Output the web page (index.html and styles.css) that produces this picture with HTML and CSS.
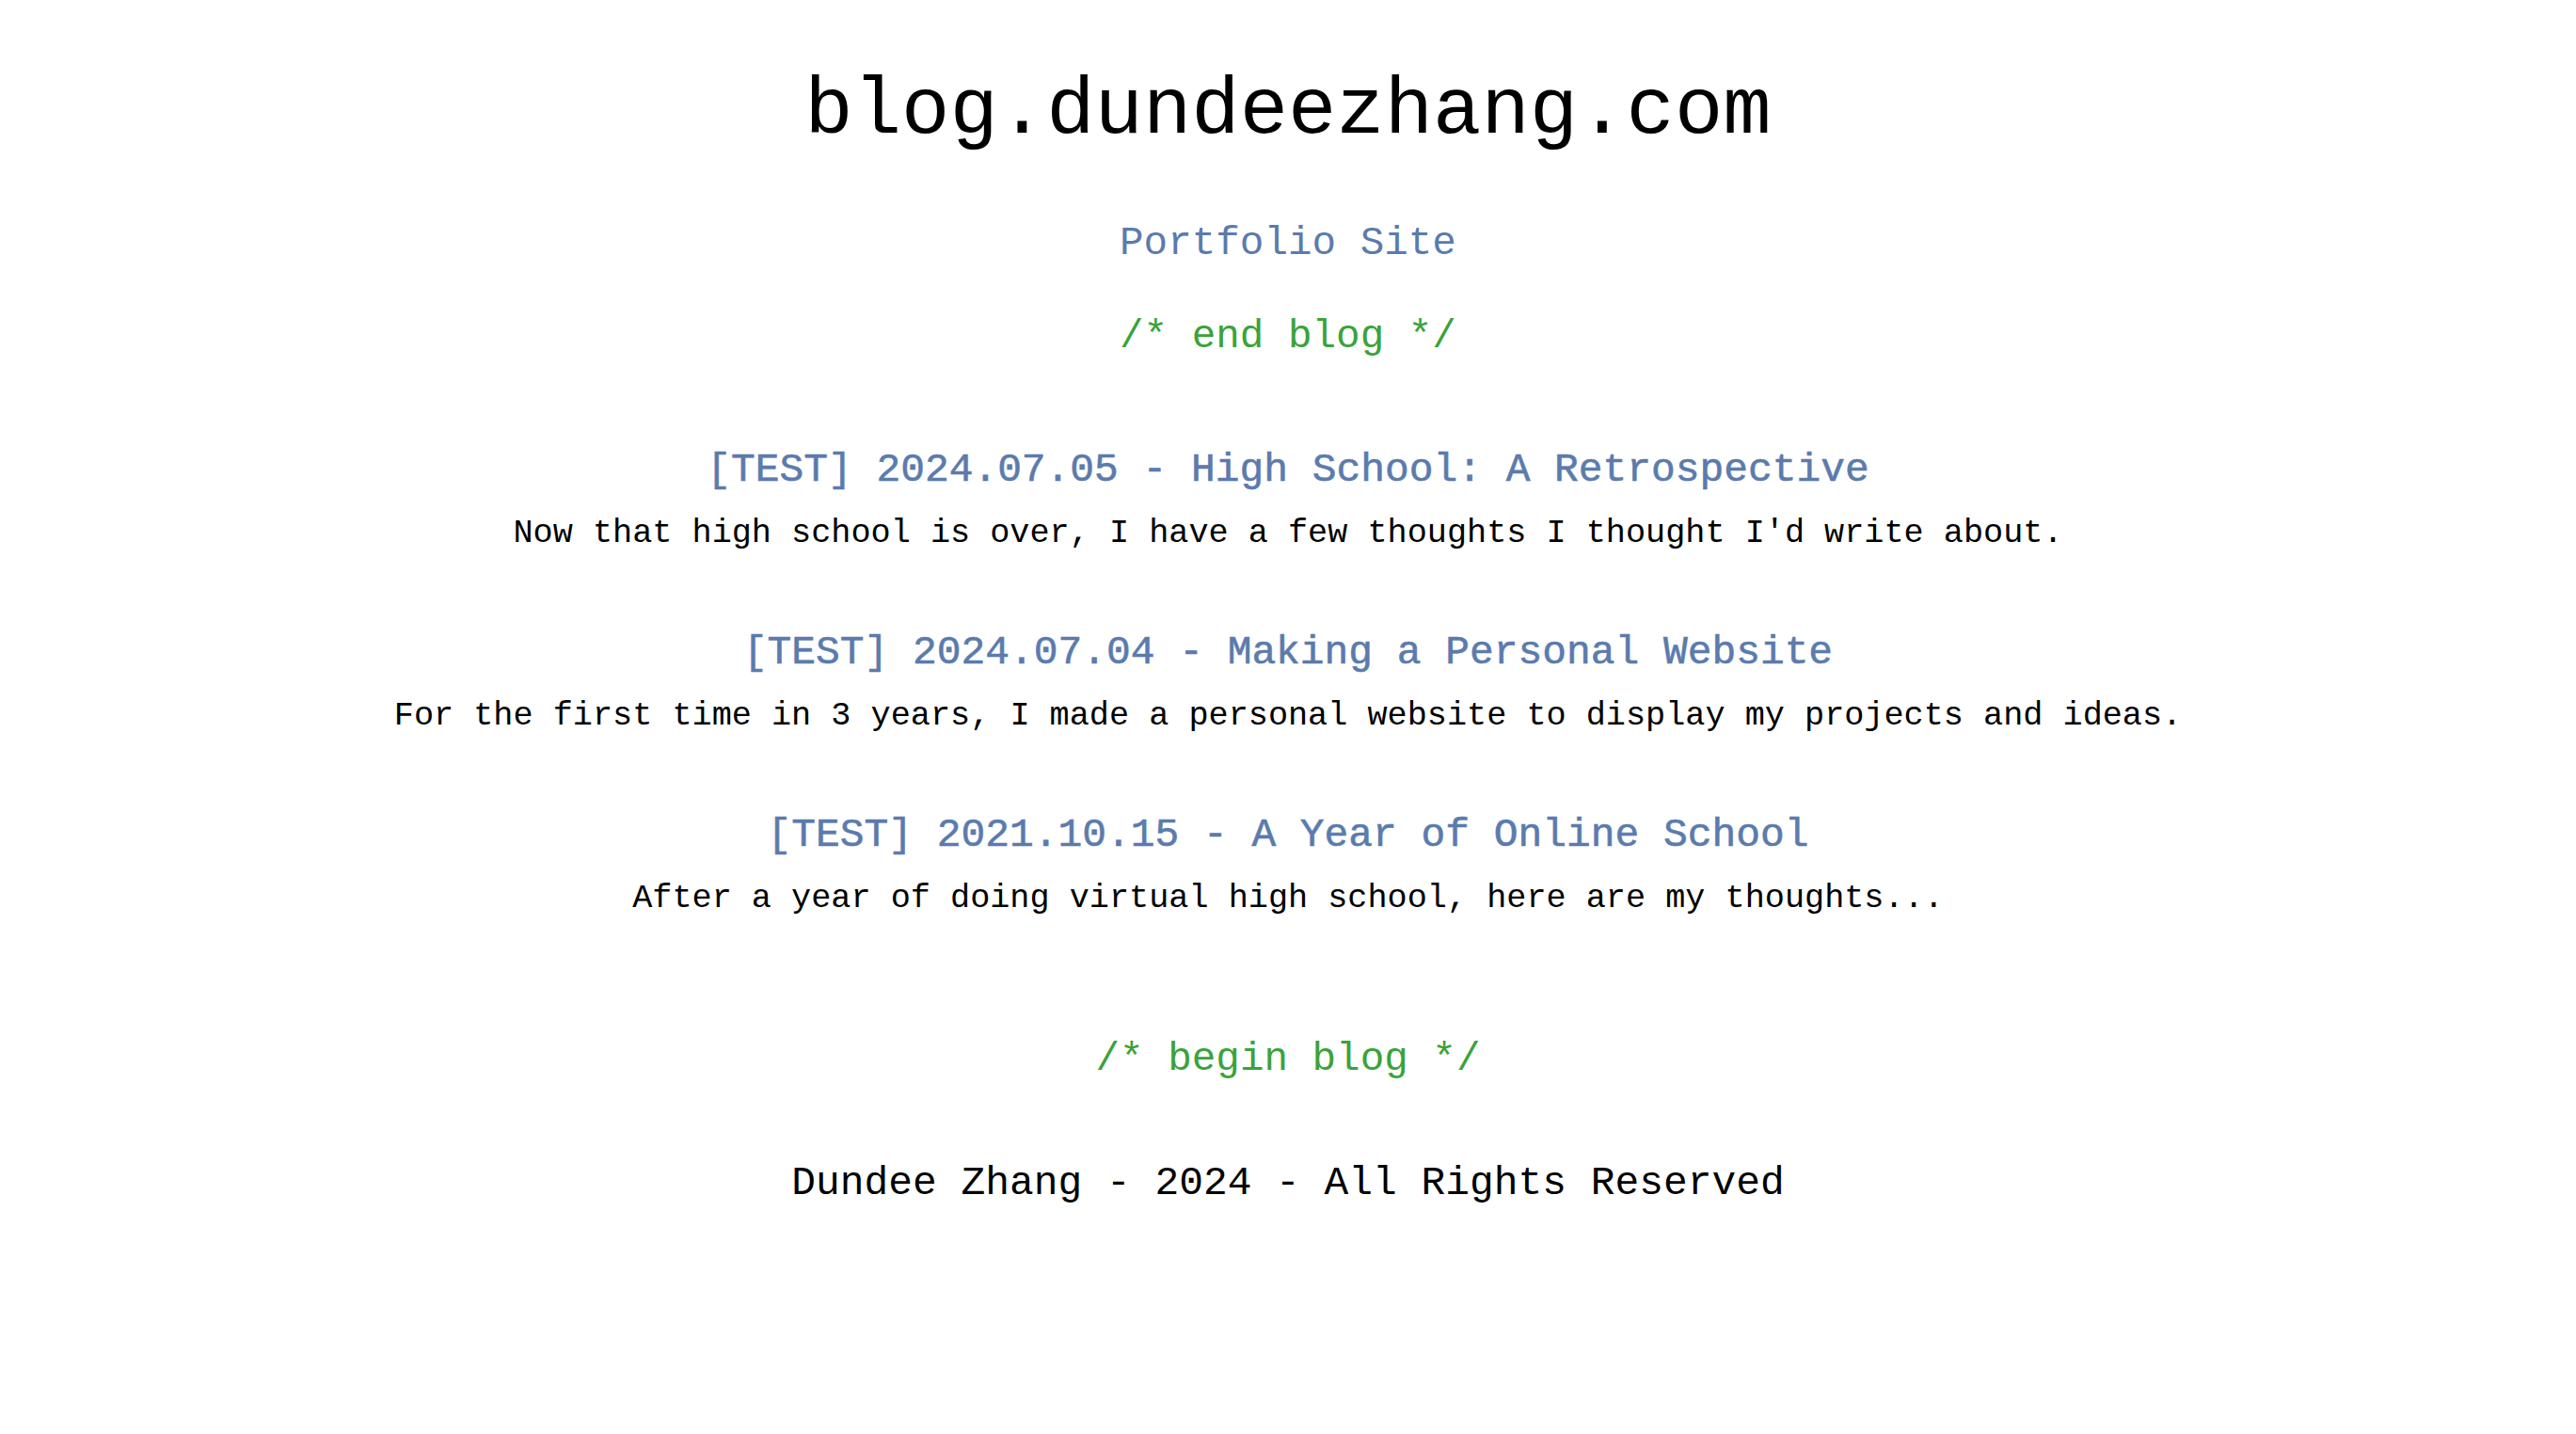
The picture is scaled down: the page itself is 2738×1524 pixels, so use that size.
FILE: index.html
```html
<!DOCTYPE html>
<html lang="en">
<head>
<meta charset="utf-8">
<title>blog.dundeezhang.com</title>
<link rel="stylesheet" href="styles.css">
</head>
<body>
<main class="page">
  <h1 class="site-title">blog.dundeezhang.com</h1>
  <a class="nav-link" href="#">Portfolio Site</a>
  <p class="comment comment-end">/* end blog */</p>
  <section class="posts">
    <article class="post">
      <a class="post-title" href="#">[TEST] 2024.07.05 - High School: A Retrospective</a>
      <p class="post-desc">Now that high school is over, I have a few thoughts I thought I'd write about.</p>
    </article>
    <article class="post">
      <a class="post-title" href="#">[TEST] 2024.07.04 - Making a Personal Website</a>
      <p class="post-desc">For the first time in 3 years, I made a personal website to display my projects and ideas.</p>
    </article>
    <article class="post">
      <a class="post-title" href="#">[TEST] 2021.10.15 - A Year of Online School</a>
      <p class="post-desc">After a year of doing virtual high school, here are my thoughts...</p>
    </article>
  </section>
  <p class="comment comment-begin">/* begin blog */</p>
  <footer class="footer">Dundee Zhang - 2024 - All Rights Reserved</footer>
</main>
</body>
</html>
```

FILE: styles.css
```css
html, body {
  margin: 0;
  padding: 0;
  background: #ffffff;
}

body {
  font-family: "Liberation Mono", "DejaVu Sans Mono", monospace;
  color: #000000;
}

.page {
  display: flex;
  flex-direction: column;
  align-items: center;
  text-align: center;
  padding-top: 67px;
}

.site-title {
  margin: 0;
  font-size: 85.6px;
  font-weight: 400;
  line-height: 103px;
}

.nav-link {
  margin-top: 64px;
  font-size: 42.6px;
  line-height: 50px;
  color: #5b7bad;
  text-decoration: none;
}

.comment {
  margin: 0;
  font-size: 42.6px;
  line-height: 50px;
  color: #3aa33a;
}

.comment-end {
  margin-top: 49px;
}

.posts {
  display: flex;
  flex-direction: column;
  align-items: center;
  gap: 81px;
  margin-top: 92px;
}

.post {
  display: flex;
  flex-direction: column;
  align-items: center;
  gap: 21px;
}

.post-title {
  font-size: 42.9px;
  line-height: 50px;
  color: #5b7bad;
  text-decoration: none;
  -webkit-text-stroke: 0.6px #5b7bad;
}

.post-desc {
  margin: 0;
  font-size: 35.2px;
  line-height: 42px;
  color: #000000;
}

.comment-begin {
  margin-top: 125px;
}

.footer {
  margin-top: 82px;
  font-size: 42.9px;
  line-height: 50px;
  color: #000000;
}
```
